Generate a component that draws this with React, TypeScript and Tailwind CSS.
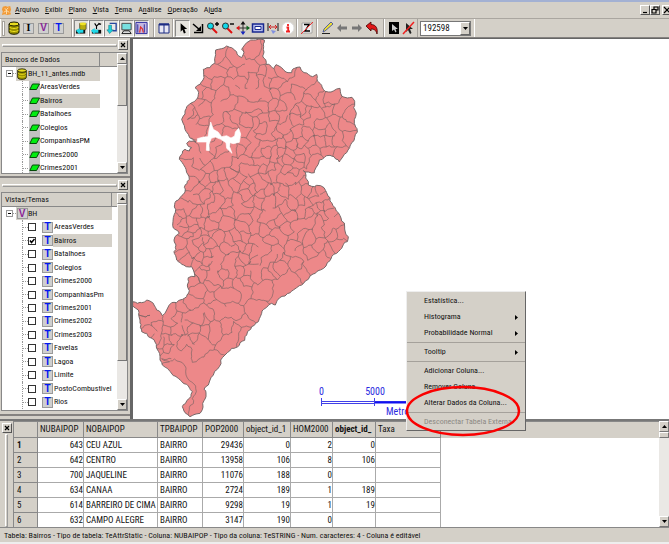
import type { ReactNode } from 'react';

type Pt = [number, number];

const OUTLINE: Pt[] = [
  [385,10],[403,12],[400,40],[398,60],[408,85],[430,98],[438,86],[455,95],[462,103],[485,110],[490,98],[510,93],
  [522,110],[535,115],[548,122],[560,115],[562,135],[575,148],[580,160],[595,168],[610,165],[630,157],[635,180],
  [652,186],[666,184],[674,196],[671,215],[679,232],[673,262],[682,288],[672,314],[660,330],[640,360],[628,378],
  [612,362],[600,358],[585,362],[568,372],[558,395],[553,410],[535,408],[520,404],[530,430],[535,447],[560,448],
  [582,455],[590,470],[600,485],[605,500],[615,515],[625,530],[635,555],[645,585],[655,602],[652,617],[635,637],
  [620,652],[605,662],[600,674],[588,690],[560,707],[535,730],[515,747],[490,762],[465,780],[440,797],[436,807],
  [425,802],[410,814],[395,832],[385,857],[365,872],[350,897],[330,920],[305,937],[285,957],[272,972],[268,992],
  [250,1017],[240,1032],[235,1047],[222,1060],[228,1082],[218,1102],[210,1132],[180,1142],[165,1130],[157,1112],
  [170,1095],[183,1082],[187,1067],[175,1050],[155,1037],[130,1019],[112,997],[97,987],[90,962],[80,937],[65,907],
  [50,892],[35,887],[30,852],[25,822],[8,810],[10,797],[35,800],[50,792],[70,802],[80,822],[97,839],[110,822],
  [125,800],[150,792],[170,782],[178,764],[172,747],[175,725],[195,722],[190,702],[185,692],[155,685],[140,672],
  [132,647],[138,627],[135,602],[148,592],[135,580],[128,568],[130,545],[137,520],[135,500],[150,485],[165,468],
  [178,430],[170,410],[160,385],[148,370],[158,345],[165,340],[178,345],[185,335],[170,322],[178,315],[198,318],
  [188,310],[175,295],[165,280],[155,250],[165,225],[178,205],[200,190],[205,175],[195,155],[210,145],[222,125],
  [220,100],[240,95],[255,80],[257,42],[275,38],[290,30],[305,35],[320,48],[335,65],[342,50],[335,40],[350,20],
  [370,12],
];

const LAKE =
  'M202 308L220 303L234 302L237 282L242 258L250 280L264 288L275 302L290 299L303 306L314 300L316 288L326 277L332 294L328 319L310 323L300 320L299 332L306 352L290 337L288 320L272 310L256 303L244 307L237 324L238 344L229 343L230 318L202 318Z';

const SITES: Pt[] = [
  [268,62],[287,80],[310,62],[325,85],[365,50],[375,95],[393,60],[395,105],[240,112],[272,108],[310,105],[335,110],
  [412,105],[430,118],[450,112],[232,138],[262,135],[295,140],[330,135],[368,135],[398,138],[415,138],[437,142],
  [510,135],[495,175],[215,165],[235,175],[280,165],[310,165],[340,180],[372,180],[400,165],
  [410,185],[440,175],[465,165],[470,190],[555,175],[548,195],[600,195],[575,190],[650,205],
  [660,230],[205,200],[225,215],[258,210],[300,200],[330,205],[365,212],[397,210],[430,205],[450,215],[480,215],
  [500,225],[515,220],[530,228],[560,230],[600,220],[630,225],[180,225],[195,235],[212,230],[200,250],[220,255],
  [262,255],[300,260],[320,245],[350,255],[375,230],[375,260],[405,245],[430,240],[455,240],[470,255],[500,250],
  [545,260],[575,265],[615,262],[650,265],[660,300],[630,310],[180,270],[215,280],[238,290],[270,275],[300,285],
  [345,285],[360,300],[395,275],[425,270],[395,300],[420,305],[445,290],[460,280],[475,300],[505,290],[535,295],
  [570,290],[595,285],[600,315],[570,315],[545,320],[515,315],[485,325],[455,320],[430,325],[400,325],[370,325],
  [345,320],[215,340],[255,335],[275,345],[190,355],[180,375],[205,380],[225,365],[235,395],[260,390],[285,370],
  [310,345],[330,345],[360,345],[385,350],[410,350],[435,345],[455,350],[480,350],[505,345],[530,350],[550,345],
  [600,340],[635,345],[515,365],[533,372],[548,375],[500,385],[475,370],[455,375],[430,370],[405,370],[385,380],
  [350,375],[315,385],[300,410],[270,420],[250,420],[230,430],[210,415],[188,405],[190,440],[210,460],[225,480],
  [245,450],[262,455],[280,445],[285,470],[310,450],[330,425],[345,400],[375,405],[400,400],[420,395],[445,395],
  [470,400],[490,410],[510,420],[525,440],[480,430],[455,425],[430,420],[405,425],[380,430],[355,435],[340,455],
  [350,475],[370,455],[390,450],[395,475],[418,465],[440,455],[460,460],[480,455],[505,465],[530,465],[550,470],
  [570,465],[580,485],[555,490],[535,500],[515,495],[495,500],[470,515],[445,490],[425,495],[405,505],[385,500],
  [360,495],[320,490],[290,500],[265,490],[245,490],[200,490],[175,480],[160,505],[150,530],[180,515],[200,530],
  [225,520],[245,515],[260,535],[295,520],[320,515],[350,520],[375,530],[400,545],[350,550],[430,535],[450,550],
  [430,565],[480,545],[510,530],[535,530],[555,520],[575,515],[590,510],[600,530],[580,540],[565,555],[545,550],
  [525,560],[500,575],[475,580],[600,560],[620,560],[635,590],[610,590],[590,580],[570,590],[140,555],[160,560],
  [185,555],[190,575],[215,560],[235,570],[160,585],[175,600],[200,595],[225,590],[290,570],[340,580],
  [375,580],[405,580],[440,590],[150,620],[180,620],[205,615],[225,610],[245,595],[260,610],[240,625],[295,610],
  [320,600],[345,600],[380,610],[420,610],[460,610],[485,605],[515,600],[540,610],[490,628],[570,620],[600,640],
  [620,630],[160,650],[195,645],[215,640],[235,650],[210,665],[230,675],[255,645],[285,635],[310,640],[330,630],
  [350,640],[370,650],[400,640],[440,640],[480,650],[510,655],[540,650],[575,670],[170,670],[200,685],[225,695],
  [245,690],[215,710],[240,710],[270,665],[290,680],[315,665],[330,680],[345,665],[380,675],[400,680],[430,665],
  [443,665],[465,670],[490,680],[550,690],[520,710],[480,725],[430,700],[450,690],[410,715],[375,695],[378,720],
  [350,700],[330,710],[305,710],[285,715],[265,730],[250,755],[300,735],[320,740],[345,735],[190,735],[205,760],
  [240,785],[270,780],[310,775],[350,775],[380,770],[405,755],[435,760],[370,810],[315,825],[255,810],
  [220,820],[195,800],[150,820],[120,830],[145,845],[175,850],[240,835],[260,830],[225,850],[205,850],[230,880],
  [250,880],[45,825],[75,840],[45,860],[80,870],[60,885],[120,860],[140,880],[170,870],[115,885],[190,885],[80,905],
  [95,920],[110,915],[130,910],[155,925],[175,915],[190,905],[205,920],[90,945],[120,935],[135,945],[165,945],
  [195,940],[105,975],[125,990],[110,960],[340,860],[320,885],[300,905],[340,890],[220,985],[290,870],
];

function closerHalf(cell: Pt[], a: Pt, b: Pt): Pt[] {
  const nx = b[0] - a[0];
  const ny = b[1] - a[1];
  const limit = (b[0] * b[0] + b[1] * b[1] - a[0] * a[0] - a[1] * a[1]) / 2;
  const out: Pt[] = [];
  cell.forEach((p, i) => {
    const q = cell[(i + 1) % cell.length];
    const dp = p[0] * nx + p[1] * ny - limit;
    const dq = q[0] * nx + q[1] * ny - limit;
    if (dp <= 0) out.push(p);
    if ((dp < 0 && dq > 0) || (dp > 0 && dq < 0)) {
      const t = dp / (dp - dq);
      out.push([p[0] + (q[0] - p[0]) * t, p[1] + (q[1] - p[1]) * t]);
    }
  });
  return out;
}

// Bends a border the same way for both of the districts that share it.
function bend(p: Pt, q: Pt, amount: number): Pt[] {
  const mx = (p[0] + q[0]) / 2;
  const my = (p[1] + q[1]) / 2;
  const length = Math.hypot(q[0] - p[0], q[1] - p[1]);
  if (length < 12) return [q];
  const dx = Math.sin(Math.round(mx) * 12.9 + Math.round(my) * 7.3) * length * amount;
  const dy = Math.cos(Math.round(mx) * 5.7 + Math.round(my) * 9.1) * length * amount;
  const mid: Pt = [mx + dx, my + dy];
  return [...bend(p, mid, amount), ...bend(mid, q, amount)];
}

const pathOf = (points: Pt[]) => 'M' + points.map((p) => p[0].toFixed(0) + ' ' + p[1].toFixed(0)).join('L');

// Moves a corner that several districts share, so that they keep meeting there.
function shiftCorner([x, y]: Pt): Pt {
  const rx = Math.round(x);
  const ry = Math.round(y);
  return [rx + Math.sin(rx * 3.1 + ry * 1.7) * 5, ry + Math.cos(rx * 2.3 + ry * 4.9) * 5];
}

function districtBorders(): string {
  const seen = new Set<string>();
  const paths: string[] = [];
  for (const site of SITES) {
    let cell: Pt[] = [[0, 0], [700, 0], [700, 1150], [0, 1150]];
    for (const other of SITES) if (other !== site) cell = closerHalf(cell, site, other);
    cell.forEach((p, i) => {
      const q = cell[(i + 1) % cell.length];
      const mx = Math.round((p[0] + q[0]) / 2);
      const my = Math.round((p[1] + q[1]) / 2);
      const key = mx + ',' + my;
      // About one border in seven is left open, which joins neighbours into larger districts.
      if (seen.has(key) || (mx * 31 + my * 17) % 7 === 0) return;
      seen.add(key);
      const start = shiftCorner(p);
      paths.push(pathOf([start, ...bend(start, shiftCorner(q), 0.15)]));
    });
  }
  return paths.join('');
}

const DISTRICTS = districtBorders();
const CITY = pathOf(OUTLINE.flatMap((p, i) => bend(p, OUTLINE[(i + 1) % OUTLINE.length], 0.14))) + 'Z';

function CityMap() {
  return (
    <svg viewBox="9 9 690 1137" className="block h-[379px] w-[230px] shrink-0" role="img" aria-label="Bairros">
      <clipPath id="city"><path d={CITY} /></clipPath>
      <path d={CITY} fill="#ed8889" />
      <path d={DISTRICTS} fill="none" stroke="#7d6565" strokeWidth="2" clipPath="url(#city)" />
      <path d={CITY} fill="none" stroke="#776868" strokeWidth="3" />
      <path d={LAKE} fill="#fff" stroke="#fff" strokeWidth="2" />
    </svg>
  );
}

function Glyph({ children }: { children: ReactNode }) {
  return <svg viewBox="0 0 14 14" className="block size-[14px]" aria-hidden="true">{children}</svg>;
}

const Barrel = () => (
  <Glyph>
    <path d="M2 3v8c0 3 10 3 10 0V3" fill="#9a9200" stroke="#1a1a00" />
    <path d="M2.5 6c1 2 8 2 9 0M2.5 9c1 2 8 2 9 0" fill="none" stroke="#eee020" />
    <ellipse cx="7" cy="3" rx="5" ry="2" fill="#e8dc20" stroke="#1a1a00" />
  </Glyph>
);

const letterStyles: Record<string, string> = {
  I: "font-['Liberation_Serif',serif] text-black",
  V: "font-['Liberation_Sans',sans-serif] text-[#8a1f96]",
  T: "font-['Liberation_Sans',sans-serif] text-[#0018f0]",
};

function LetterBox({ letter }: { letter: string }) {
  return (
    <span className={`flex size-[11px] shrink-0 items-center justify-center border border-[#9a9a9a] bg-[#cfcfcf] text-[10px] leading-none font-bold ${letterStyles[letter]}`}>
      {letter}
    </span>
  );
}

const lens = (sign: string) => (
  <Glyph>
    <path d="M6 7l5 5" stroke="#e01010" strokeWidth="2" />
    <circle cx="4.5" cy="5" r="3" fill="#10d8e8" stroke="#333" />
    <path d={sign} stroke="#000" strokeWidth="1.4" />
  </Glyph>
);

type Tool = { name: string; icon: ReactNode; pressed?: boolean };

const toolGroups: Tool[][] = [
  [
    { name: 'Banco de dados', icon: <Barrel /> },
    { name: 'Importar', icon: <LetterBox letter="I" /> },
    { name: 'Nova vista', icon: <LetterBox letter="V" /> },
    { name: 'Novo tema', icon: <LetterBox letter="T" /> },
  ],
  [
    { name: 'Janela de bancos', pressed: true, icon: (
      <Glyph><path d="M5 2v6c0 2 7 2 7 0V2z" fill="#b8ac10" stroke="#333" strokeWidth=".7" /><ellipse cx="8.500" cy="2.500" rx="3.500" ry="1.500" fill="#f0e428" /><path d="M1 9h10v4H1z" fill="#111" /><path d="M1 10l4-3v2h4v3H5v2z" fill="#20d8e8" /></Glyph>) },
    { name: 'Janela de vistas', pressed: true, icon: (
      <Glyph><path d="M3 1h8l1 2v10H3z" fill="#e4e4e4" /><path d="M5 2l2 3 3-3M7 5v3M9 2l3 1" fill="none" stroke="#000" strokeWidth="1.200" /><path d="M2 9h10v4H2z" fill="#111" /><path d="M1 10l4-3v2h4v3H5v2z" fill="#20d8e8" /></Glyph>) },
    { name: 'Janela gráfica', pressed: true, icon: (
      <Glyph><path d="M5 2h7v8H8" fill="#e8e8e8" stroke="#2848a0" strokeWidth="1.500" /><path d="M4 4h3v5h2l-4 4-3-4h2z" fill="#18d0e0" stroke="#066" strokeWidth=".5" /></Glyph>) },
    { name: 'Tela', pressed: true, icon: (
      <Glyph><path d="M2 2h10v7H2z" fill="#78e0e0" stroke="#444" /><path d="M4 10h6l2 3H2z" fill="#ddd" stroke="#111" /></Glyph>) },
    { name: 'Gráfico', pressed: true, icon: (
      <Glyph><path d="M1 1h12v12H1z" fill="#c4b8e0" stroke="#2828a0" /><path d="M3 12V3M10 12V3" stroke="#24249a" /><path d="M5 12l1-6 2 2 1 4" fill="none" stroke="#e03030" strokeWidth="1.300" /></Glyph>) },
  ],
  [
    { name: 'Lado a lado', icon: (
      <Glyph><path d="M2 3h10v9H2zM7 3v9" fill="#e8e8f4" stroke="#1c2c84" /><path d="M2 3.500h10" stroke="#1c2c84" strokeWidth="2" /></Glyph>) },
  ],
  [
    { name: 'Cursor', pressed: true, icon: <Glyph><path d="M5 2v9l2-2 1.500 4 2-1L9 8h3z" fill="#000" /></Glyph> },
    { name: 'Cursor de área', icon: <Glyph><path d="M2 3l7 6M11.500 3v8.500H3" fill="none" stroke="#000" strokeWidth="1.500" /><path d="M10 10V5l-5 5z" /></Glyph> },
    { name: 'Ampliar', icon: lens('M9 3h4M11 1v4') },
    { name: 'Reduzir', icon: lens('M9 3h4') },
    { name: 'Deslocar', icon: (
      <Glyph><path d="M7 1v12M1 7h12" stroke="#333" /><path d="M7 0l2.500 3.500h-5z" fill="#111" /><path d="M7 14l2.500-3.500h-5z" fill="#1828c0" /><path d="M0 7l3.500-2.500v5z" fill="#e01818" /><path d="M14 7l-3.500-2.500v5z" fill="#106820" /></Glyph>) },
    { name: 'Enquadrar', icon: (
      <Glyph><path d="M1.500 3h11v8h-11z" fill="#b8c0ee" stroke="#182890" strokeWidth="1.500" /><path d="M4 5.500h6v3H4z" fill="#fff" stroke="#182890" /></Glyph>) },
    { name: 'Distância', icon: (
      <Glyph><path d="M2 2v8M12 2v8" stroke="#444" strokeWidth="1.300" /><path d="M3 6h8M5 4L3 6l2 2M9 4l2 2-2 2" fill="none" stroke="#d02020" /><path d="M5 9l2 4 3-3z" fill="#8090e0" /></Glyph>) },
    { name: 'Informação', icon: (
      <Glyph><circle cx="7" cy="7" r="6" fill="#fff" stroke="#ddd" /><path d="M7 3v2M5.500 6.500h1.700v4M5 10.500h4" fill="none" stroke="#f02020" strokeWidth="1.800" /></Glyph>) },
  ],
  [
    { name: 'Apagar seleção', icon: (
      <Glyph><path d="M2 2h10v10H2z" fill="#eee" stroke="#888" strokeWidth=".6" /><path d="M4 3.500h5L5 10h5" fill="none" stroke="#000" strokeWidth="1.300" /><path d="M1 13L13 1" stroke="#f03030" /></Glyph>) },
  ],
  [
    { name: 'Editar', icon: (
      <Glyph><path d="M2 12.500h8" stroke="#222" /><path d="M3 11l1-3 7-7 2 2-8 7z" fill="#f0e030" stroke="#3344a0" strokeWidth=".8" /></Glyph>) },
    { name: 'Anterior', icon: <Glyph><path d="M2 7l4-4v2.500h6v3H6V11z" fill="#777" /></Glyph> },
    { name: 'Próximo', icon: <Glyph><path d="M12 7L8 3v2.500H2v3h6V11z" fill="#777" /></Glyph> },
    { name: 'Desfazer', icon: <Glyph><path d="M1 5l5-4v2.500c5 0 7 4 6 9.500-1-4-3-5-6-5V10z" fill="#e01818" stroke="#400" strokeWidth=".8" /></Glyph> },
  ],
  [
    { name: 'Selecionar', icon: <Glyph><path d="M2 1h10v12H2z" fill="#000" /><path d="M5 3v7l2-1.500 1.500 3 1-1L8.500 8H11z" fill="#ccc" /></Glyph> },
    { name: 'Desmarcar', icon: <Glyph><path d="M4 2v9l2-2 2 4 1.500-1L8 8h3z" fill="#222" /><path d="M1 13L12 1" stroke="#f02020" strokeWidth="1.500" /></Glyph> },
  ],
];

const groupWidths = ['w-[72px]', 'w-[82px]', 'w-[19px]', 'w-[124px]', 'w-[20px]', 'w-[67px]', 'w-[34px]'];

function Toolbar() {
  return (
    <div className="flex h-[20px] items-center border-y border-t-[#aaa6a0] border-b-[#858280] bg-[#d4d0c8]">
      {toolGroups.map((group, g) => (
        <div key={g} className={`flex h-full shrink-0 items-center border-l border-l-white pl-px shadow-[inset_-1px_0_0_#a6a29c] ${groupWidths[g]}`}>
          {g === 0 && <span className="mr-px h-[15px] w-[3px] border border-[#a6a29c] bg-white" />}
          {group.map((tool) => (
            <button
              key={tool.name}
              aria-label={tool.name}
              className={`flex h-[17px] w-[15px] shrink-0 items-center justify-center ${tool.pressed ? 'border border-t-[#888] border-r-white border-b-white border-l-[#888] bg-[#e6e4df]' : ''}`}
            >
              {tool.icon}
            </button>
          ))}
        </div>
      ))}
      <div className="relative ml-[2px] h-[15px] w-[51px] border border-[#777] bg-white">
        <select aria-label="Escala" className="block size-full appearance-none pl-[2px] text-[9px] leading-[12px] outline-none">
          <option>192598</option>
        </select>
        <span className="pointer-events-none absolute top-0 right-0 flex h-[13px] w-[10px] items-center justify-center border border-t-white border-r-[#666] border-b-[#666] border-l-white bg-[#d4d0c8]">
          <svg viewBox="0 0 5 3" className="h-[3px] w-[5px]"><path d="M0 0h5L2.500 3z" /></svg>
        </span>
      </div>
      <span className="ml-[3px] h-full w-px bg-white" />
    </div>
  );
}

const menus = [
  ['', 'A', 'rquivo'], ['', 'E', 'xibir'], ['', 'P', 'lano'], ['', 'V', 'ista'],
  ['', 'T', 'ema'], ['A', 'n', 'álise'], ['', 'O', 'peração'], ['Aj', 'u', 'da'],
];

function WindowButton({ name, d }: { name: string; d: string }) {
  return (
    <button aria-label={name} className="flex h-[10px] w-[10px] shrink-0 items-center justify-center border border-t-white border-r-[#555] border-b-[#555] border-l-white bg-[#d4d0c8]">
      <svg viewBox="0 0 8 8" className="size-[8px] shrink-0"><path d={d} fill="none" stroke="#000" strokeWidth="1.200" /></svg>
    </button>
  );
}

function MenuBar() {
  return (
    <header className="flex h-[18px] items-center border-t-2 border-[#a3b1d3] bg-[#d4d0c8]">
      <svg viewBox="0 0 12 12" className="mr-[3px] ml-px size-[11px]" aria-hidden="true">
        <path d="M2 2l3-1 2 1 3-1 1 4-1 3 1 2-4 1-3-1-3 1 1-4-1-2z" fill="#f39a35" />
        <path d="M4 4l2 1 2-2M3 8l3-2 3 2M6 5v5" stroke="#fde0b0" fill="none" />
      </svg>
      <nav className="flex gap-[6px]">
        {menus.map(([before, key, after]) => (
          <button key={before + key + after}>
            {before}<u>{key}</u>{after}
          </button>
        ))}
      </nav>
      <div className="ml-auto flex">
        <WindowButton name="Minimizar" d="M2 6.500h4" />
        <WindowButton name="Restaurar" d="M3 3V1h4v3H5M1 3.500h4V7H1z" />
        <span className="ml-[2px] flex w-[7px] overflow-hidden"><WindowButton name="Fechar" d="M1 1l6 6M7 1L1 7" /></span>
      </div>
    </header>
  );
}

function DockHandle({ name }: { name: string }) {
  return (
    <div className="flex h-[14px] shrink-0 items-center gap-px px-[2px]">
      <span className="h-[3px] flex-1 border border-t-white border-r-[#999] border-b-[#999] border-l-white" />
      <WindowButton name={name} d="M2 2l4 4M6 2L2 6" />
    </div>
  );
}

const arrowUp = 'M0 3h5L2.500 0z';
const arrowDown = 'M0 0h5L2.500 3z';

function ScrollBar({ thumb }: { thumb: string }) {
  const button = 'flex h-[11px] shrink-0 items-center justify-center border border-t-white border-r-[#777] border-b-[#777] border-l-white bg-[#d4d0c8]';
  return (
    <div className="flex w-[10px] shrink-0 flex-col bg-[#eae8e5]">
      <button aria-label="Rolar para cima" className={button}><svg viewBox="0 0 5 3" className="h-[3px] w-[5px]"><path d={arrowUp} /></svg></button>
      <span className={`border border-t-white border-r-[#777] border-b-[#777] border-l-white bg-[#d4d0c8] ${thumb}`} />
      <button aria-label="Rolar para baixo" className={`mt-auto ${button}`}><svg viewBox="0 0 5 3" className="h-[3px] w-[5px]"><path d={arrowDown} /></svg></button>
    </div>
  );
}

function TreeHeader({ title, width }: { title: string; width: string }) {
  return (
    <div className="flex h-[14px] shrink-0 border-b border-[#888] bg-[#d4d0c8]">
      <span className={`border-r border-[#888] pl-[3px] leading-[13px] ${width}`}>{title}</span>
    </div>
  );
}

function TreeRoot({ label, icon }: { label: string; icon: ReactNode }) {
  return (
    <div className="flex items-center pl-[4px]">
      <span className="flex size-[7px] shrink-0 items-center justify-center border border-[#999]"><span className="h-px w-[3px] bg-black" /></span>
      <span className="w-[3px] border-t border-dotted border-[#999]" />
      <span className="flex h-full flex-1 items-center bg-[#d4d0c8]"><span className="flex w-[12px] shrink-0 justify-center">{icon}</span>{label}</span>
    </div>
  );
}

const layers = ['AreasVerdes', 'Bairros', 'Batalhoes', 'Colegios', 'CompanhiasPM', 'Crimes2000', 'Crimes2001'];
const themes = [
  'AreasVerdes', 'Bairros', 'Batalhoes', 'Colegios', 'Crimes2000', 'CompanhiasPm', 'Crimes2001', 'Crimes2002',
  'Crimes2003', 'Favelas', 'Lagoa', 'Limite', 'PostoCombustivel', 'Rios',
];

function Branch() {
  return (
    <>
      <span className="h-full shrink-0 border-l border-dotted border-[#999]" />
      <span className="w-[5px] shrink-0 border-t border-dotted border-[#999]" />
    </>
  );
}

function Sidebar() {
  return (
    <aside className="flex w-[130px] shrink-0 flex-col bg-[#d4d0c8]">
      <DockHandle name="Fechar bancos de dados" />
      <section className="mr-[2px] ml-px flex h-[122px] shrink-0 border border-[#888] bg-white">
        <div className="min-w-0 flex-1 overflow-hidden">
          <TreeHeader title="Bancos de Dados" width="w-[98px]" />
          <div className="grid h-[108px] w-[98px] auto-rows-fr">
            <TreeRoot label="BH_11_antes.mdb" icon={<Barrel />} />
            {layers.map((name) => (
              <div key={name} className="flex items-center pl-[20px]">
                <Branch />
                <span className="ml-px flex h-full w-[11px] shrink-0 items-center bg-[#c2c2c2]">
                  <svg viewBox="0 0 11 8" className="h-[8px] w-[11px]"><path d="M3.500 1h7l-3 5.500H.8z" fill="#00ec10" stroke="#044a08" /></svg>
                </span>
                <span className={`flex h-full flex-1 items-center ${name === 'Bairros' ? 'bg-[#d4d0c8]' : ''}`}>{name}</span>
              </div>
            ))}
          </div>
        </div>
        <ScrollBar thumb="h-[42px]" />
      </section>
      <div className="mt-[2px] border-t-2 border-[#858280]" />
      <DockHandle name="Fechar vistas" />
      <section className="mr-[2px] ml-px flex min-h-0 flex-1 border border-[#888] bg-white">
        <div className="min-w-0 flex-1 overflow-hidden">
          <TreeHeader title="Vistas/Temas" width="w-[110px]" />
          <div className="grid h-[202px] w-[110px] auto-rows-fr">
            <TreeRoot label="BH" icon={<LetterBox letter="V" />} />
            {themes.map((name) => (
              <label key={name} className="flex items-center pl-[20px]">
                <Branch />
                <span className="relative mr-[6px] size-[8px] shrink-0">
                  <input type="checkbox" defaultChecked={name === 'Bairros'} className="peer block size-full appearance-none border border-[#333] bg-white" />
                  <svg viewBox="0 0 8 8" className="pointer-events-none absolute inset-0 hidden size-[8px] peer-checked:block"><path d="M2 3.500l1.500 2L6.500 2" fill="none" stroke="#000" strokeWidth="1.500" /></svg>
                </span>
                <LetterBox letter="T" />
                <span className={`flex h-full flex-1 items-center pl-px ${name === 'Bairros' ? 'bg-[#d4d0c8]' : ''}`}>{name}</span>
              </label>
            ))}
          </div>
        </div>
        <ScrollBar thumb="h-[157px]" />
      </section>
      <div className="mt-[3px] mb-[3px] border-t-2 border-[#858280]" />
    </aside>
  );
}

function MenuItem({ label, submenu, disabled }: { label: string; submenu?: boolean; disabled?: boolean }) {
  return (
    <button role="menuitem" disabled={disabled} className="flex h-[16px] w-full items-center justify-between pr-[7px] pl-[17px] whitespace-nowrap disabled:text-[#8c8984]">
      {label}
      {submenu && <svg viewBox="0 0 3 5" className="h-[5px] w-[3px]"><path d="M0 0v5l3-2.500z" /></svg>}
    </button>
  );
}

const MenuLine = () => <div className="my-px h-px bg-[#a5a19b]" />;

function ContextMenu() {
  return (
    <div role="menu" className="absolute top-[291px] left-[406px] w-[120px] border border-t-[#eee] border-r-[#666] border-b-[#666] border-l-[#eee] bg-[#d4d0c8] pt-px">
      <MenuItem label="Estatística..." />
      <MenuItem label="Histograma" submenu />
      <MenuItem label="Probabilidade Normal" submenu />
      <MenuLine />
      <MenuItem label="Tooltip" submenu />
      <MenuLine />
      <MenuItem label="Adicionar Coluna..." />
      <MenuItem label="Remover Coluna..." />
      <MenuItem label="Alterar Dados da Coluna..." />
      <MenuLine />
      <MenuItem label="Desconectar Tabela Externa" disabled />
    </div>
  );
}

const columns = [
  { name: 'NUBAIPOP', width: 'w-[46px]' }, { name: 'NOBAIPOP', width: 'w-[74px]' },
  { name: 'TPBAIPOP', width: 'w-[45px]' }, { name: 'POP2000', width: 'w-[41px]' },
  { name: 'object_id_1', width: 'w-[47px]' }, { name: 'HOM2000', width: 'w-[42px]' },
  { name: 'object_id_', width: 'w-[43px]' }, { name: 'Taxa', width: 'w-[65px]' },
];
const rows = [
  ['643', 'CEU AZUL', 'BAIRRO', '29436', '0', '2', '0', ''],
  ['642', 'CENTRO', 'BAIRRO', '13958', '106', '8', '106', ''],
  ['700', 'JAQUELINE', 'BAIRRO', '11076', '188', '0', '', ''],
  ['634', 'CANAA', 'BAIRRO', '2724', '189', '1', '189', ''],
  ['614', 'BARREIRO DE CIMA', 'BAIRRO', '9298', '19', '1', '19', ''],
  ['632', 'CAMPO ALEGRE', 'BAIRRO', '3147', '190', '0', '', ''],
];

function DataGrid() {
  return (
    <section className="flex h-[108px] shrink-0 border-t-2 border-[#777] bg-[#d4d0c8]">
      <div className="flex w-[13px] shrink-0 flex-col items-center pt-[2px]">
        <WindowButton name="Fechar tabela" d="M2 2l4 4M6 2L2 6" />
        <span className="mt-px w-[3px] flex-1 border border-t-white border-r-[#999] border-b-[#999] border-l-white" />
      </div>
      <div className="min-w-0 flex-1 overflow-hidden border-t border-l border-[#888] bg-white">
        <div className="bg-[linear-gradient(#d4d0c8_16px,transparent_16px)]">
          <table className="w-[427px] table-fixed border-separate border-spacing-0 text-[9px] whitespace-nowrap">
            <thead>
              <tr className="h-[16px] text-left leading-[15px]">
                <th className="w-[24px] border-r border-b border-[#888] bg-[#d4d0c8] p-0" />
                {columns.map((c) => (
                  <th key={c.name} className={`overflow-hidden border-r border-b border-[#888] bg-[#d4d0c8] p-0 pl-[2px] ${c.width} ${c.name === 'object_id_' ? 'font-bold' : 'font-normal'}`}>{c.name}</th>
                ))}
              </tr>
            </thead>
            <tbody>
              {rows.map((row, r) => (
                <tr key={row[0]} className="h-[15px] leading-[14px]">
                  <th className={`border-r border-b border-[#888] bg-[#d4d0c8] p-0 pl-[3px] text-left ${r === 0 ? 'font-bold' : 'font-normal'}`}>{r + 1}</th>
                  {row.map((value, c) => (
                    <td key={c} className={`border-r border-b border-[#aaa] p-0 ${c === 1 || c === 2 ? 'pl-[2px]' : 'text-right'}`}>{value}</td>
                  ))}
                </tr>
              ))}
            </tbody>
          </table>
        </div>
      </div>
      <ScrollBar thumb="h-[6px]" />
    </section>
  );
}

function ScaleBar() {
  return (
    <div className="absolute top-[347px] left-[184px] text-[10px] leading-[12px] text-[#2a2ae0]">
      <div className="flex">
        <span className="w-[38px] pl-[2px]">0</span>
        <span className="w-[40px] text-center">5000</span>
      </div>
      <svg viewBox="0 0 110 8" className="block h-[8px] w-[110px]" aria-hidden="true">
        <path d="M4.500 0v8M57.500 0v8M4 3.500h106M4 5.500h54" stroke="#4040e8" />
        <path d="M58 4.500h52" stroke="#1010f0" strokeWidth="2" />
      </svg>
      <div className="pl-[69px]">Metros</div>
    </div>
  );
}

export default function App() {
  return (
    <div className="relative flex h-screen flex-col overflow-hidden bg-[#d4d0c8] font-['Roboto_Condensed','Lato','Liberation_Sans',sans-serif] text-[8px] leading-[12px] text-[#111]">
      <MenuBar />
      <Toolbar />
      <div className="flex min-h-0 flex-1">
        <Sidebar />
        <main className="relative min-w-0 flex-1 overflow-hidden border-t border-l-[3px] border-[#666] bg-white">
          <CityMap />
          <ScaleBar />
        </main>
      </div>
      <DataGrid />
      <footer className="h-[17px] shrink-0 border-t border-b-2 border-t-[#888] border-b-[#eee] pl-[4px] leading-[15px] whitespace-nowrap">
        Tabela: Bairros - Tipo de tabela: TeAttrStatic - Coluna: NUBAIPOP - Tipo da coluna: TeSTRING - Num. caracteres: 4 - Coluna é editável
      </footer>
      <ContextMenu />
      <svg viewBox="0 0 116 52" className="pointer-events-none absolute top-[385px] left-[405px] h-[52px] w-[116px]" aria-hidden="true">
        <ellipse cx="58" cy="26" rx="56" ry="24" fill="none" stroke="#fa0000" strokeWidth="2.500" />
      </svg>
    </div>
  );
}
